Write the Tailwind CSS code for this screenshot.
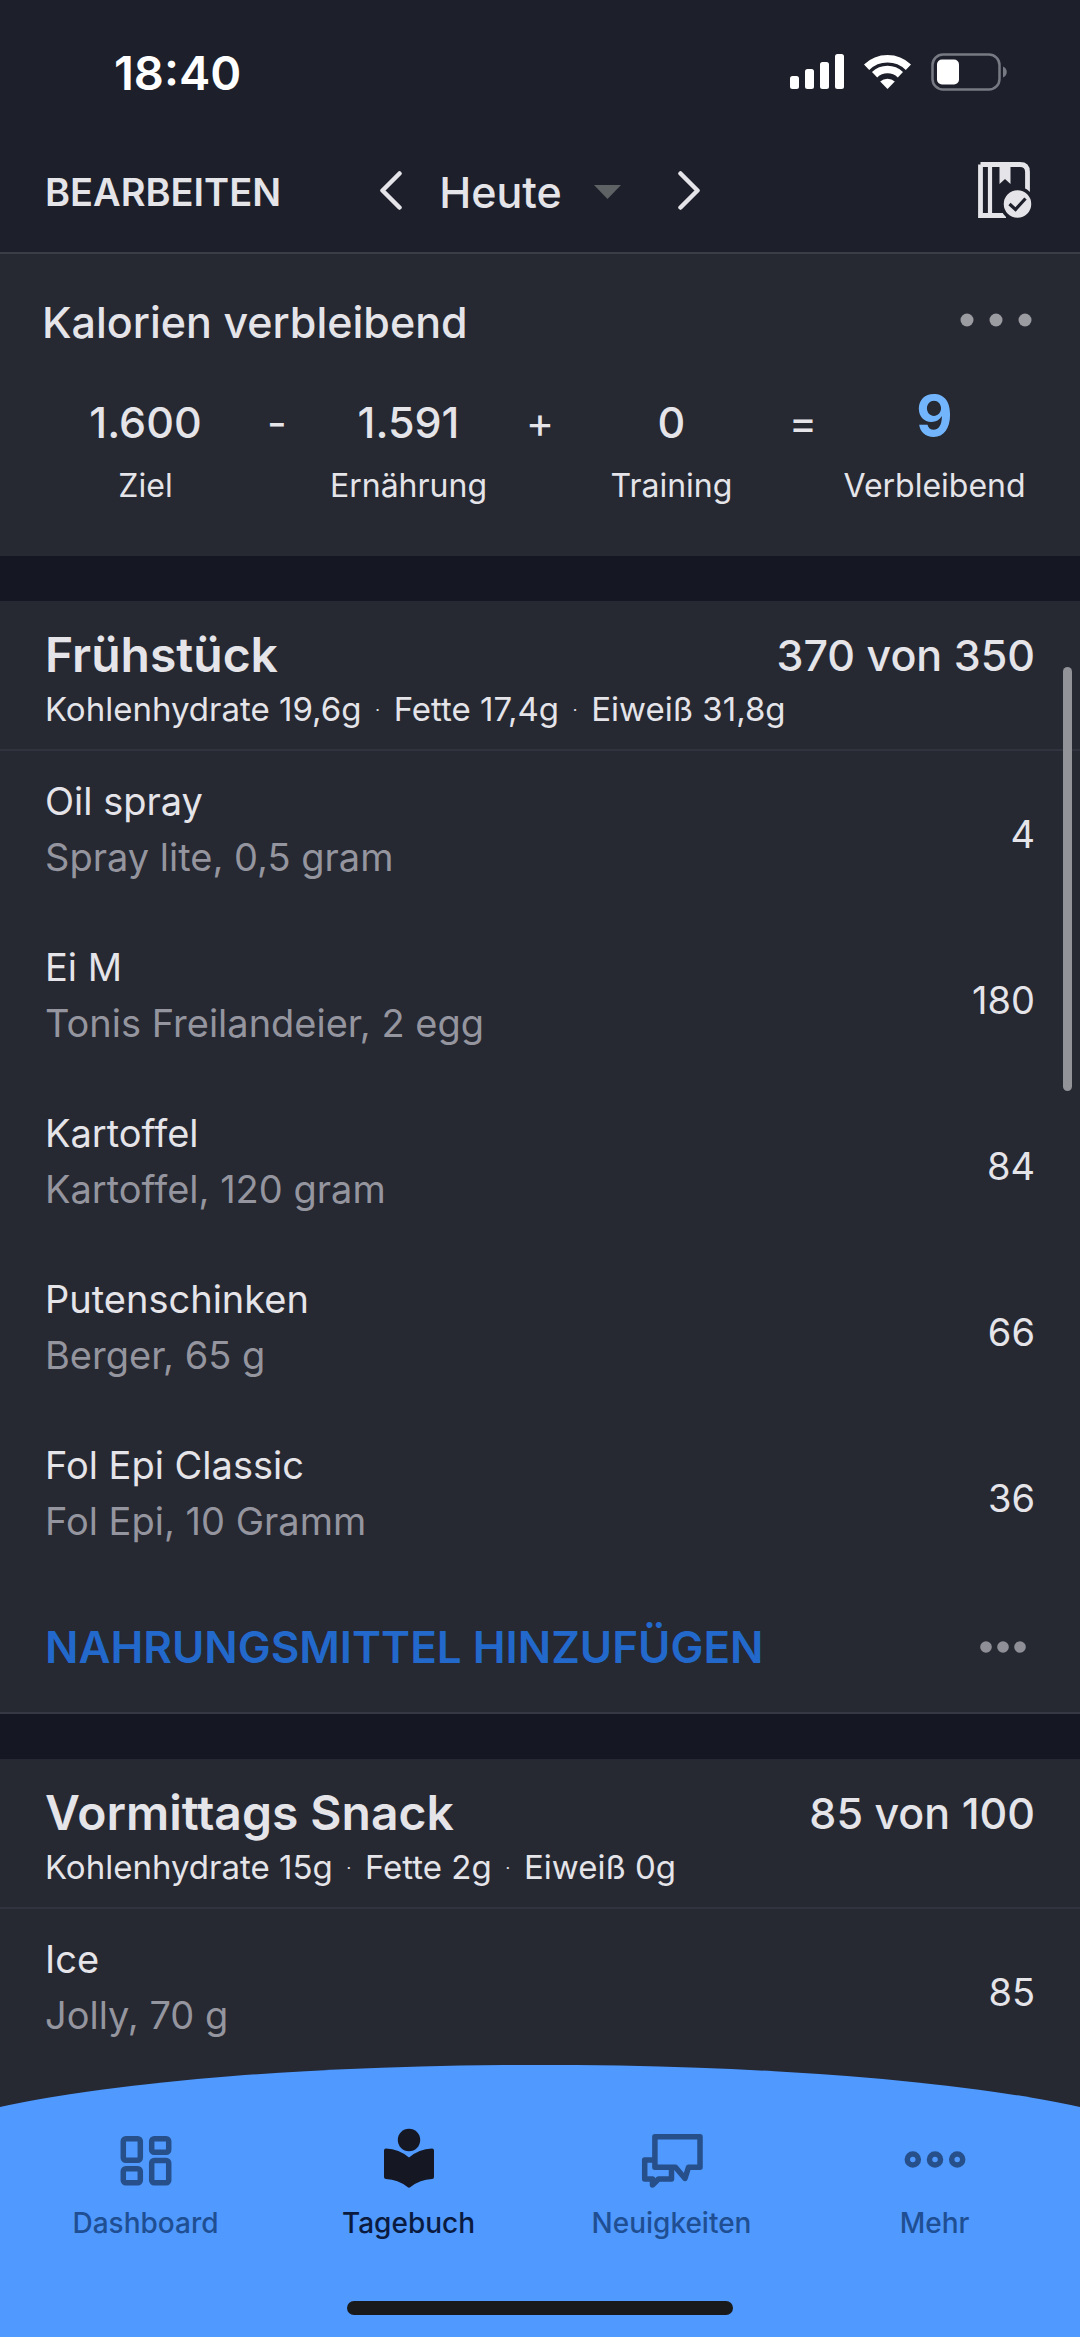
<!DOCTYPE html>
<html lang="de">
<head>
    <meta charset="UTF-8">
    <meta name="viewport" content="width=device-width, initial-scale=1.0">
    <title>Tagebuch | Heute</title>
    <script src="https://cdn.jsdelivr.net/npm/@tailwindcss/browser@4"></script>
</head>
<body class="relative min-h-screen flex flex-col bg-[#262832] text-[#e4e4e9] font-['Inter',sans-serif]">
    <header class="bg-[#1d1f2a] pt-12 border-b-2 border-[#3a3c46]">
        <!-- Status bar -->
        <div class="flex items-center justify-between h-12 pl-[114px] pr-[72px] text-white">
            <span class="text-[47px] leading-none font-semibold">18:40</span>
            <div class="flex items-center gap-5">
                <svg class="w-[54px] h-9" viewBox="0 0 54 36" fill="currentColor" aria-hidden="true">
                    <rect x="0" y="22" width="9" height="13" rx="2.5"/>
                    <rect x="15" y="15" width="9" height="20" rx="2.5"/>
                    <rect x="30" y="8" width="9" height="27" rx="2.5"/>
                    <rect x="45" y="0" width="9" height="35" rx="2.5"/>
                </svg>
                <svg class="w-[47px] h-9" viewBox="0 0 47 36" aria-hidden="true">
                    <g fill="none" stroke="currentColor" stroke-width="7.5">
                        <path d="M2.6 13.2a30 30 0 0 1 41.8 0"/>
                        <path d="M10.6 20.8a18.5 18.5 0 0 1 25.8 0"/>
                    </g>
                    <path d="M16.2 27.6a10.5 10.5 0 0 1 14.6 0L23.5 35z" fill="currentColor"/>
                </svg>
                <svg class="w-[77px] h-[38px]" viewBox="0 0 77 38" aria-hidden="true">
                    <rect x="1.5" y="1.5" width="67" height="35" rx="10.5" fill="none" stroke="#777983" stroke-width="2.5"/>
                    <rect x="6" y="6.5" width="22" height="25" rx="5" fill="currentColor"/>
                    <path d="M72 13.5c5 2 5 9 0 11z" fill="#777983"/>
                </svg>
            </div>
        </div>

        <!-- Day switcher -->
        <div class="grid grid-cols-[1fr_auto_1fr] items-center mt-8 h-[124px] px-[45px]">
            <button type="button" class="justify-self-start pt-1 text-[38px] leading-none font-semibold">BEARBEITEN</button>
            <div class="flex items-center">
                <button type="button" aria-label="Vorheriger Tag">
                    <svg class="w-6 h-10" viewBox="0 0 24 40" fill="none" stroke="currentColor" stroke-width="4.5" stroke-linecap="round" stroke-linejoin="round"><path d="M20.5 3.5 3.5 20.5l17 17"/></svg>
                </button>
                <button type="button" class="flex items-center gap-8 ml-9 pt-1 text-[43px] leading-none font-medium">
                    Heute
                    <svg class="w-[27px] h-[14px]" viewBox="0 0 27 14" fill="#5f6264" aria-hidden="true"><path d="M0 0h27L13.5 14z"/></svg>
                </button>
                <button type="button" class="ml-14" aria-label="Nächster Tag">
                    <svg class="w-6 h-10" viewBox="0 0 24 40" fill="none" stroke="currentColor" stroke-width="4.5" stroke-linecap="round" stroke-linejoin="round"><path d="m3.5 3.5 17 17-17 17"/></svg>
                </button>
            </div>
            <button type="button" class="justify-self-end" aria-label="Tagebuch abschließen">
                <svg class="w-[57px] h-14" viewBox="0 0 57 56" aria-hidden="true">
                    <path d="M2.5 2.5H42Q49.5 2.5 49.5 10V30M28 53.5H2.5V2.5" fill="none" stroke="currentColor" stroke-width="4.8"/>
                    <path d="M12 2.5V53.5" fill="none" stroke="currentColor" stroke-width="4.2"/>
                    <path d="M21.5 2h11v20l-5.5-5-5.5 5z" fill="currentColor"/>
                    <circle cx="39.5" cy="42" r="15.5" fill="currentColor" stroke="#1d1f2a" stroke-width="3.5"/>
                    <path d="m31.5 42 6 5.5 10-11" fill="none" stroke="#1d1f2a" stroke-width="3.2"/>
                </svg>
            </button>
        </div>
    </header>

    <main class="flex flex-col grow">
        <!-- Calories -->
        <section class="h-[302px] pt-10">
            <div class="flex items-center justify-between pl-[42px] pr-[48px]">
                <h2 class="text-[43px] leading-[56px] font-medium">Kalorien verbleibend</h2>
                <button type="button" aria-label="Mehr Optionen">
                    <svg class="w-[72px] h-5" viewBox="0 0 72 20" fill="#9b9ca2"><circle cx="7" cy="8" r="6.5"/><circle cx="36" cy="8" r="6.5"/><circle cx="65" cy="8" r="6.5"/></svg>
                </button>
            </div>
            <div class="grid grid-cols-4 mt-11 px-[14px] text-center">
                <div class="relative">
                    <p class="text-[43px] leading-[56px] font-medium">1.600</p>
                    <p class="text-[32px] leading-10 mt-4">Ziel</p>
                    <span class="absolute top-0 right-0 translate-x-1/2 text-[43px] leading-[56px]">-</span>
                </div>
                <div class="relative">
                    <p class="text-[43px] leading-[56px] font-medium">1.591</p>
                    <p class="text-[32px] leading-10 mt-4">Ernährung</p>
                    <span class="absolute top-0 right-0 translate-x-1/2 text-[43px] leading-[56px]">+</span>
                </div>
                <div class="relative">
                    <p class="text-[43px] leading-[56px] font-medium">0</p>
                    <p class="text-[32px] leading-10 mt-4">Training</p>
                    <span class="absolute top-0 right-0 translate-x-1/2 text-[43px] leading-[56px]">=</span>
                </div>
                <div>
                    <p class="text-[56px] leading-[44px] font-bold text-[#72b5fc]">9</p>
                    <p class="text-[32px] leading-10 mt-7">Verbleibend</p>
                </div>
            </div>
        </section>

        <!-- Breakfast -->
        <section class="border-t-[45px] border-[#151722]">
            <div class="h-[150px] pt-6 px-[45px] border-b-2 border-[#31333e]">
                <div class="flex items-center justify-between">
                    <h2 class="text-[48px] leading-[60px] font-semibold">Frühstück</h2>
                    <span class="text-[43px] leading-[60px] font-medium">370 von 350</span>
                </div>
                <p class="text-[33px] leading-10 mt-1">Kohlenhydrate 19,6g <span class="mx-1 align-[4px] text-xl leading-none font-light">·</span> Fette 17,4g <span class="mx-1 align-[4px] text-xl leading-none font-light">·</span> Eiweiß 31,8g</p>
            </div>
            <ul class="text-[38px] leading-[56px]">
                <li class="flex items-center justify-between h-[166px] px-[45px]">
                    <div class="pb-2.5">
                        <p>Oil spray</p>
                        <p class="text-[#94959e]">Spray lite, 0,5 gram</p>
                    </div>
                    <span>4</span>
                </li>
                <li class="flex items-center justify-between h-[166px] px-[45px]">
                    <div class="pb-2.5">
                        <p>Ei M</p>
                        <p class="text-[#94959e]">Tonis Freilandeier, 2 egg</p>
                    </div>
                    <span>180</span>
                </li>
                <li class="flex items-center justify-between h-[166px] px-[45px]">
                    <div class="pb-2.5">
                        <p>Kartoffel</p>
                        <p class="text-[#94959e]">Kartoffel, 120 gram</p>
                    </div>
                    <span>84</span>
                </li>
                <li class="flex items-center justify-between h-[166px] px-[45px]">
                    <div class="pb-2.5">
                        <p>Putenschinken</p>
                        <p class="text-[#94959e]">Berger, 65 g</p>
                    </div>
                    <span>66</span>
                </li>
                <li class="flex items-center justify-between h-[166px] px-[45px]">
                    <div class="pb-2.5">
                        <p>Fol Epi Classic</p>
                        <p class="text-[#94959e]">Fol Epi, 10 Gramm</p>
                    </div>
                    <span>36</span>
                </li>
            </ul>
            <div class="flex items-center justify-between h-[133px] pl-[45px] pr-[54px] border-b-2 border-[#363843]">
                <button type="button" class="text-[44px] leading-none font-semibold text-[#2269cb]">NAHRUNGSMITTEL HINZUFÜGEN</button>
                <button type="button" aria-label="Mehr Optionen">
                    <svg class="w-[46px] h-3" viewBox="0 0 46 12" fill="#8f9097"><circle cx="6" cy="6" r="5.8"/><circle cx="23" cy="6" r="5.8"/><circle cx="40" cy="6" r="5.8"/></svg>
                </button>
            </div>
        </section>

        <!-- Morning snack -->
        <section class="border-t-[45px] border-[#151722]">
            <div class="h-[150px] pt-6 px-[45px] border-b-2 border-[#31333e]">
                <div class="flex items-center justify-between">
                    <h2 class="text-[48px] leading-[60px] font-semibold">Vormittags Snack</h2>
                    <span class="text-[43px] leading-[60px] font-medium">85 von 100</span>
                </div>
                <p class="text-[33px] leading-10 mt-1">Kohlenhydrate 15g <span class="mx-1 align-[4px] text-xl leading-none font-light">·</span> Fette 2g <span class="mx-1 align-[4px] text-xl leading-none font-light">·</span> Eiweiß 0g</p>
            </div>
            <ul class="text-[38px] leading-[56px]">
                <li class="flex items-center justify-between h-[166px] px-[45px]">
                    <div class="pb-2.5">
                        <p>Ice</p>
                        <p class="text-[#94959e]">Jolly, 70 g</p>
                    </div>
                    <span>85</span>
                </li>
            </ul>
        </section>
    </main>

    <!-- Scroll position -->
    <div class="absolute right-2 top-[667px] w-[9px] h-[424px] rounded-full bg-[#929399]"></div>

    <!-- Tab bar -->
    <nav class="fixed bottom-0 inset-x-0 text-[28px] leading-8 font-medium text-[#1f4f92]">
        <svg class="block w-full h-[42px]" viewBox="0 0 1080 42" preserveAspectRatio="none" fill="#4f99ff" aria-hidden="true"><path d="M0 42A645 93 0 0 1 1080 42z"/></svg>
        <div class="bg-[#4f99ff] pt-5 pb-[22px]">
            <div class="grid grid-cols-4 px-[14px]">
                <a href="#" class="flex flex-col items-center">
                    <svg class="w-16 h-16" viewBox="0 0 64 64" fill="none" stroke="#274f8a" stroke-width="5.5" aria-hidden="true">
                        <rect x="9.3" y="11.7" width="17" height="21.5" rx="2.5"/>
                        <rect x="37.7" y="11.7" width="17" height="13.5" rx="2.5"/>
                        <rect x="9.3" y="41.8" width="17" height="14" rx="2.5"/>
                        <rect x="37.7" y="33.5" width="17" height="22.3" rx="2.5"/>
                    </svg>
                    <span class="mt-4">Dashboard</span>
                </a>
                <a href="#" aria-current="page" class="flex flex-col items-center text-[#0b1b40]">
                    <svg class="w-16 h-16" viewBox="0 0 64 64" fill="#151722" aria-hidden="true">
                        <circle cx="32" cy="13" r="11.2"/>
                        <path d="M9 21.5Q22 22 32 30.5Q42 22 55 21.5Q57 21.5 57 23.5V50Q57 52 55 52Q43 52.5 33.5 60Q32 61.5 30.5 60Q21 52.5 9 52Q7 52 7 50V23.5Q7 21.5 9 21.5z"/>
                    </svg>
                    <span class="mt-4">Tagebuch</span>
                </a>
                <a href="#" class="flex flex-col items-center">
                    <svg class="w-16 h-16" viewBox="0 0 64 64" fill="none" stroke="#274f8a" stroke-width="5.5" stroke-linejoin="round" aria-hidden="true">
                        <path d="M14.9 9.7H60V40.3H48.5L45 51.5 35.5 40.3H14.9z"/>
                        <path d="M14.9 33H4.7V52H12.5V58L18.5 52H31.5V41"/>
                    </svg>
                    <span class="mt-4">Neuigkeiten</span>
                </a>
                <a href="#" class="flex flex-col items-center">
                    <svg class="w-16 h-16" viewBox="0 0 64 64" fill="none" stroke="#274f8a" stroke-width="5.5" aria-hidden="true">
                        <circle cx="9.8" cy="32.5" r="5.5"/>
                        <circle cx="32" cy="32.5" r="5.5"/>
                        <circle cx="54.2" cy="32.5" r="5.5"/>
                    </svg>
                    <span class="mt-4">Mehr</span>
                </a>
            </div>
            <div class="w-[386px] h-[14px] mx-auto mt-[62px] rounded-full bg-[#191a1b]"></div>
        </div>
    </nav>
</body>
</html>
